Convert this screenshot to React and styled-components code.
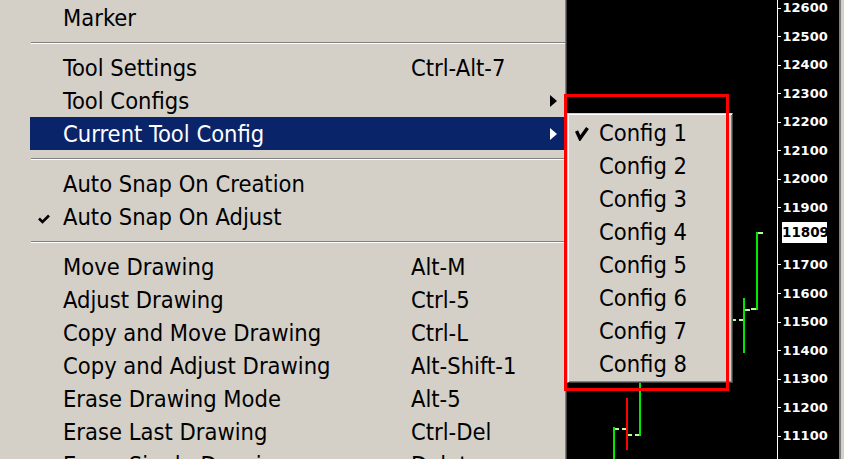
import React from "react";
import styled, { createGlobalStyle } from "styled-components";

const GlobalStyle = createGlobalStyle`
  html, body {
    margin: 0;
    padding: 0;
    background: #000;
    overflow: hidden;
  }
`;

const MENU_FONT = `"DejaVu Sans Condensed", "DejaVu Sans", "Liberation Sans", sans-serif`;

const Screen = styled.div`
  position: relative;
  display: flex;
  width: 844px;
  height: 459px;
  overflow: hidden;
  background: #000;
  font-family: ${MENU_FONT};
  font-stretch: condensed;
`;

const Menu = styled.div`
  flex-shrink: 0;
  box-sizing: border-box;
  width: 567px;
  height: 459px;
  padding: 1px 1px 0 30px;
  background: #d4d0c8;
  border-right: 1px solid #404040;
  box-shadow: inset -1px 0 0 #808080;
  overflow: hidden;
`;

const Item = styled.div`
  display: grid;
  grid-template-columns: 33px 348px 1fr 24px;
  align-items: center;
  height: 33px;
  line-height: 34px;
  font-size: 23.5px;
  white-space: nowrap;
  color: ${(p) => (p.$active ? "#fff" : "#000")};
  background: ${(p) => (p.$active ? "#0a246a" : "transparent")};
`;

const CheckCell = styled.div`
  display: flex;
  align-items: center;
  padding-left: ${(p) => p.$inset}px;
  padding-top: ${(p) => p.$drop || 0}px;
`;

const Separator = styled.div`
  box-sizing: border-box;
  height: 17px;
  padding: 8px 0 0 1px;
  &::after {
    content: "";
    display: block;
    border-top: 1px solid #808080;
    border-bottom: 1px solid #fff;
  }
`;

const Arrow = styled.svg`
  display: block;
  margin-left: 9px;
`;

const Plot = styled.div`
  flex-shrink: 0;
  width: 210px;
  height: 459px;
  background: #000;
`;

const Axis = styled.div`
  position: relative;
  flex-shrink: 0;
  box-sizing: border-box;
  width: 62px;
  height: 459px;
  border-left: 1px solid #fff;
  background: #000;
  font-family: "DejaVu Sans", sans-serif;
  font-stretch: normal;
  font-weight: bold;
  font-size: 13px;
  color: #fff;
`;

const PriceLabel = styled.div`
  position: absolute;
  left: 0;
  display: flex;
  align-items: center;
  height: 14px;
`;

const Tick = styled.span`
  width: 3px;
  height: 1px;
  background: #fff;
`;

const PriceText = styled.span`
  margin-left: 1.5px;
  line-height: 14px;
`;

const LastPrice = styled.div`
  position: absolute;
  left: 4px;
  top: 222px;
  width: 45px;
  height: 21px;
  line-height: 21px;
  background: #fff;
  color: #000;
  font-size: 13.5px;
  overflow: hidden;
`;

const Frame = styled.div`
  flex-shrink: 0;
  box-sizing: border-box;
  width: 5px;
  height: 459px;
  background: #d4d0c8;
  border-left: 2px solid #808080;
`;

const Submenu = styled.div`
  position: absolute;
  left: 567px;
  top: 113px;
  box-sizing: border-box;
  width: 166px;
  height: 270px;
  padding: 3px 1px 0 1px;
  background: #d4d0c8;
  border: 1px solid;
  border-color: #d4d0c8 #404040 #404040 #d4d0c8;
  box-shadow: inset 1px 1px 0 #fff, inset -1px -1px 0 #808080;
`;

const SubItem = styled.div`
  display: grid;
  grid-template-columns: 30px 1fr;
  align-items: center;
  height: 33px;
  line-height: 33px;
  font-size: 23.5px;
  white-space: nowrap;
  color: #000;
`;

const Highlight = styled.div`
  position: absolute;
  left: 564px;
  top: 94px;
  box-sizing: border-box;
  width: 165px;
  height: 297px;
  border: 3px solid #ff0000;
  pointer-events: none;
`;

const menuGroups = [
  [{ label: "Marker" }],
  [
    { label: "Tool Settings", shortcut: "Ctrl-Alt-7" },
    { label: "Tool Configs", submenu: true },
    { label: "Current Tool Config", submenu: true, active: true },
  ],
  [
    { label: "Auto Snap On Creation" },
    { label: "Auto Snap On Adjust", checked: true },
  ],
  [
    { label: "Move Drawing", shortcut: "Alt-M" },
    { label: "Adjust Drawing", shortcut: "Ctrl-5" },
    { label: "Copy and Move Drawing", shortcut: "Ctrl-L" },
    { label: "Copy and Adjust Drawing", shortcut: "Alt-Shift-1" },
    { label: "Erase Drawing Mode", shortcut: "Alt-5" },
    { label: "Erase Last Drawing", shortcut: "Ctrl-Del" },
    { label: "Erase Single Drawing", shortcut: "Delete" },
  ],
];

const configs = [1, 2, 3, 4, 5, 6, 7, 8];

const prices = [
  12600, 12500, 12400, 12300, 12200, 12100, 12000, 11900, 11700, 11600,
  11500, 11400, 11300, 11200, 11100,
];

const priceY = (p) => 8 + ((12600 - p) / 100) * 28.55;

// bars in plot coordinates: [x, y, w, h, colour]
const GREEN = "#00e800";
const LIGHT = "#b4ff96";
const RED = "#ff0000";
const bars = [
  [189, 232, 2, 78, GREEN],
  [191, 232, 5, 2, LIGHT],
  [184, 308, 5, 2, LIGHT],
  [176, 298, 2, 55, GREEN],
  [178, 309, 5, 2, LIGHT],
  [172, 319, 4, 2, LIGHT],
  [166, 319, 3, 2, LIGHT],
  [72, 300, 2, 136, GREEN],
  [68, 434, 4, 2, LIGHT],
  [59, 398, 2, 52, RED],
  [55, 428, 4, 2, LIGHT],
  [61, 434, 4, 2, LIGHT],
  [46, 427, 2, 40, GREEN],
  [48, 428, 4, 2, LIGHT],
];

const SmallCheck = () => (
  <svg width="12" height="10" viewBox="0 0 12 10">
    <polyline
      points="1,4.5 4.5,8 11,1.5"
      fill="none"
      stroke="#000"
      strokeWidth="2.6"
    />
  </svg>
);

const BigCheck = () => (
  <svg width="14" height="15" viewBox="0 0 14 15">
    <polyline
      points="1.5,5 5,12.5 12.5,2"
      fill="none"
      stroke="#000"
      strokeWidth="3.4"
    />
  </svg>
);

const MenuRow = ({ item }) => (
  <Item $active={item.active}>
    <CheckCell $inset={8} $drop={3}>
      {item.checked && <SmallCheck />}
    </CheckCell>
    <span>{item.label}</span>
    <span>{item.shortcut}</span>
    <span>
      {item.submenu && (
        <Arrow width="7" height="12" viewBox="0 0 7 12">
          <polygon points="0,0 7,6 0,12" fill="currentColor" />
        </Arrow>
      )}
    </span>
  </Item>
);

export default function App() {
  return (
    <>
      <GlobalStyle />
      <Screen>
        <Menu>
          {menuGroups.map((group, gi) => (
            <React.Fragment key={gi}>
              {gi > 0 && <Separator />}
              {group.map((item) => (
                <MenuRow key={item.label} item={item} />
              ))}
            </React.Fragment>
          ))}
        </Menu>
        <Plot>
          <svg width="210" height="459" shapeRendering="crispEdges">
            {bars.map(([x, y, w, h, c], i) => (
              <rect key={i} x={x} y={y} width={w} height={h} fill={c} />
            ))}
          </svg>
        </Plot>
        <Axis>
          {prices.map((p) => (
            <PriceLabel key={p} style={{ top: priceY(p) - 7 }}>
              <Tick />
              <PriceText>{p}</PriceText>
            </PriceLabel>
          ))}
          <LastPrice>11809</LastPrice>
        </Axis>
        <Frame />
        <Submenu>
          {configs.map((n) => (
            <SubItem key={n}>
              <CheckCell $inset={6}>{n === 1 && <BigCheck />}</CheckCell>
              <span>Config {n}</span>
            </SubItem>
          ))}
        </Submenu>
        <Highlight />
      </Screen>
    </>
  );
}
